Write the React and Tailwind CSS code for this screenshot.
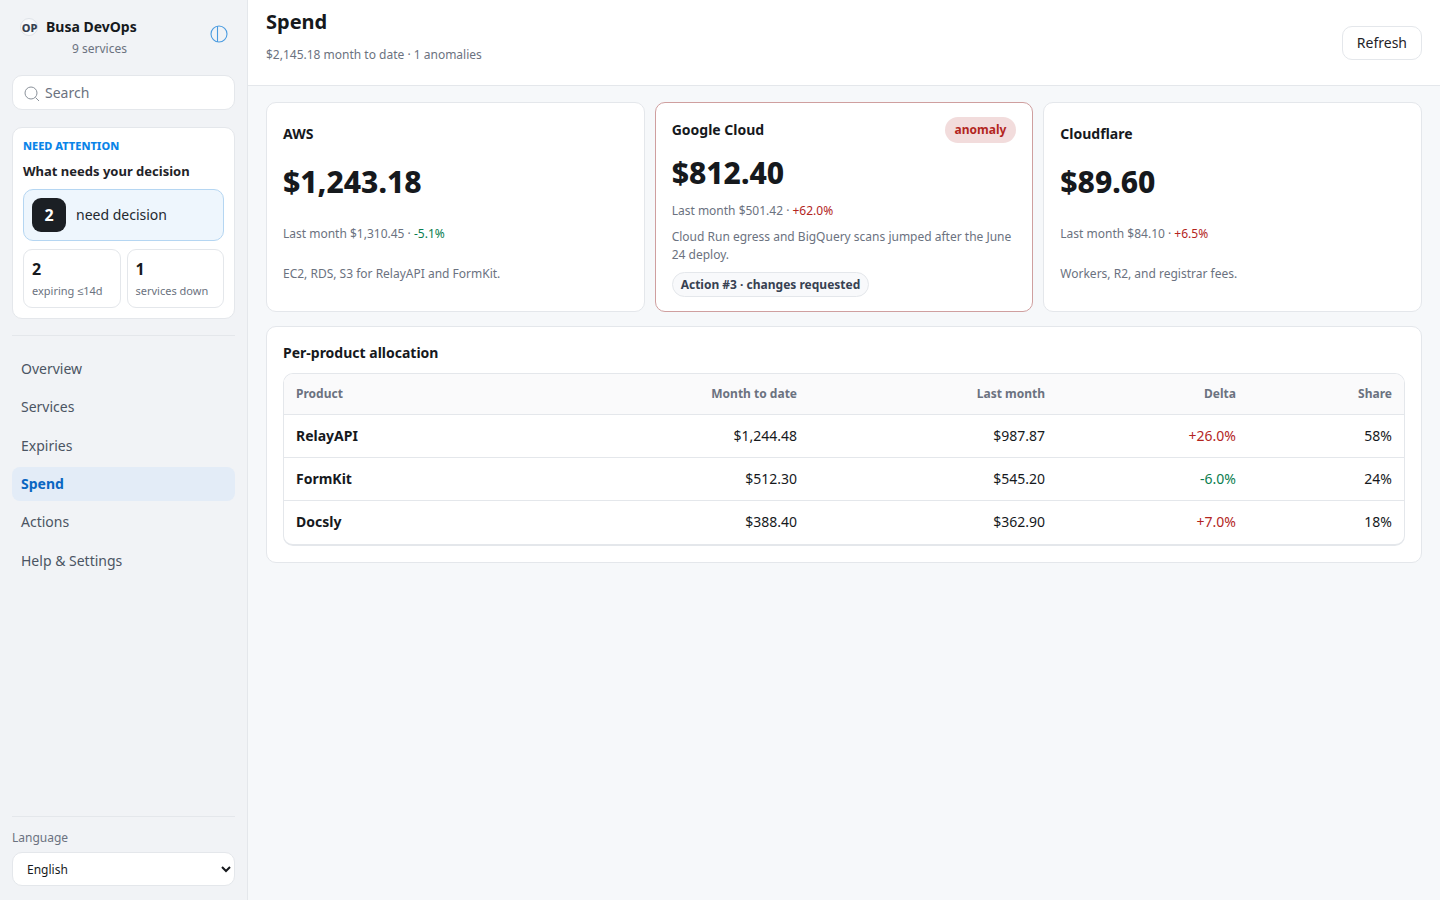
import React from 'react';

const navItems = ['Overview', 'Services', 'Expiries', 'Spend', 'Actions', 'Help & Settings'];

const providers = [
    { name: 'AWS', amount: '$1,243.18', last: '$1,310.45', delta: '-5.1%', good: true, note: 'EC2, RDS, S3 for RelayAPI and FormKit.' },
    { name: 'Cloudflare', amount: '$89.60', last: '$84.10', delta: '+6.5%', good: false, note: 'Workers, R2, and registrar fees.' },
];

const rows = [
    { name: 'RelayAPI', mtd: '$1,244.48', last: '$987.87', delta: '+26.0%', good: false, share: '58%' },
    { name: 'FormKit', mtd: '$512.30', last: '$545.20', delta: '-6.0%', good: true, share: '24%' },
    { name: 'Docsly', mtd: '$388.40', last: '$362.90', delta: '+7.0%', good: false, share: '18%' },
];

const Sidebar = () => (
    <aside className="w-[248px] shrink-0 h-[900px] flex flex-col bg-[#f1f3f6] border-r border-[#e4e7eb] px-3">
        <div className="relative h-[75px] pt-[17px]">
            <div className="flex items-center gap-[8px] pl-2">
                <span className="w-[18px] h-[18px] pl-[1px] rounded-full border border-[#dfe3e8] bg-[#f8f9fb] flex items-center justify-center text-[11px] leading-none font-extrabold text-[#374151]">OP</span>
                <span className="text-sm leading-5 font-bold text-[#16191d]">Busa DevOps</span>
            </div>
            <div className="pl-[60px] mt-[3px] text-xs leading-[18px] text-[#6b7280]">9 services</div>
            <svg className="absolute left-[197.5px] top-[25px]" width="18" height="18" viewBox="0 0 18 18" fill="none" stroke="#4a9be0" strokeWidth="1.1">
                <circle cx="9" cy="9" r="8" />
                <line x1="7.5" y1="1" x2="7.5" y2="17" />
            </svg>
        </div>
        <div className="h-[35px] flex items-center gap-[5px] rounded-[10px] border border-[#e4e7eb] bg-white pl-[11px]">
            <svg width="16" height="18" viewBox="0 0 16 18" fill="none" stroke="#8b929b" strokeWidth="1" className="mt-[3px]">
                <circle cx="7" cy="8" r="6" />
                <line x1="11.5" y1="12.5" x2="15" y2="16" />
            </svg>
            <span className="text-sm text-[#6b7280]">Search</span>
        </div>
        <div className="mt-[17px] h-[192px] rounded-[10px] border border-[#e4e7eb] bg-white px-[10px] pt-[10px]">
            <div className="text-[11px] leading-[16px] font-extrabold text-[#0a84e8]">NEED ATTENTION</div>
            <div className="mt-[8px] text-[13px] leading-[18px] font-bold text-[#1f2328]">What needs your decision</div>
            <div className="mt-[9px] h-[52px] flex items-center gap-[10px] rounded-[10px] border border-[#b5d6f2] bg-[#eef6fd] pl-2">
                <span className="w-[34px] h-[34px] rounded-[9px] bg-[#1b1f24] text-white flex items-center justify-center text-base font-bold">2</span>
                <span className="text-sm text-[#24292f]">need decision</span>
            </div>
            <div className="mt-2 grid grid-cols-2 gap-[6px]">
                <div className="h-[59px] rounded-[9px] border border-[#e4e7eb] px-2 pt-2">
                    <div className="text-base leading-[22px] font-bold text-[#16191d]">2</div>
                    <div className="text-[11px] leading-[16px] mt-[3px] text-[#6b7280]">expiring ≤14d</div>
                </div>
                <div className="h-[59px] rounded-[9px] border border-[#e4e7eb] px-2 pt-2">
                    <div className="text-base leading-[22px] font-bold text-[#16191d]">1</div>
                    <div className="text-[11px] leading-[16px] mt-[3px] text-[#6b7280]">services down</div>
                </div>
            </div>
        </div>
        <div className="mt-[16px] border-t border-[#e4e7eb]"></div>
        <nav className="mt-[15.7px] flex flex-col gap-[4px]">
            {navItems.map((item) => (
                <div
                    key={item}
                    className={item === 'Spend'
                        ? 'h-[34.4px] flex items-center px-[9px] rounded-lg bg-[#e3ecf7] text-sm font-bold text-[#0a66c2]'
                        : 'h-[34.4px] flex items-center px-[9px] rounded-lg text-sm text-[#4b5563]'}
                >
                    {item}
                </div>
            ))}
        </nav>
        <div className="mt-auto border-t border-[#e4e7eb] pt-[12px] pb-[14px]">
            <div className="text-xs leading-[18px] text-[#6b7280]">Language</div>
            <select className="mt-[5px] w-full h-[34px] rounded-[10px] border border-[#e4e7eb] bg-white pl-[10px] text-xs text-[#16191d]">
                <option>English</option>
            </select>
        </div>
    </aside>
);

const Delta = ({ good, children }) => (
    <span className={good ? 'text-[#0a7d4f]' : 'text-[#b3261e]'}>{children}</span>
);

const ProviderCard = ({ p }) => (
    <div className="h-[210px] rounded-[10px] border border-[#e4e7eb] bg-white px-4 pt-[21px]">
        <div className="text-sm leading-5 font-bold text-[#16191d]">{p.name}</div>
        <div className="mt-[18px] text-[30px] leading-[40px] font-extrabold text-[#16191d]">{p.amount}</div>
        <div className="mt-[23px] text-xs leading-[18px] text-[#6b7280]">Last month {p.last} · <Delta good={p.good}>{p.delta}</Delta></div>
        <div className="mt-[22px] text-xs leading-[18px] text-[#6b7280]">{p.note}</div>
    </div>
);

const App = () => (
    <div className="flex h-[900px] overflow-hidden bg-[#f6f8fa] font-['Noto_Sans',sans-serif]">
        <Sidebar />
        <main className="flex-1 min-w-0">
            <header className="h-[86px] flex items-center justify-between border-b border-[#e4e7eb] bg-white pl-[18px] pr-[18px]">
                <div className="self-start pt-[7px]">
                    <h1 className="text-xl leading-[30px] font-bold text-[#16191d]">Spend</h1>
                    <p className="mt-[9px] text-xs leading-[18px] text-[#6b7280]">$2,145.18 month to date · 1 anomalies</p>
                </div>
                <button className="h-[34px] px-[14px] rounded-[10px] border border-[#e4e7eb] bg-white text-sm text-[#1f2328]">Refresh</button>
            </header>
            <div className="px-[18px] pt-4">
                <div className="grid grid-cols-3 gap-[10px]">
                    <ProviderCard p={providers[0]} />
                    <div className="h-[210px] rounded-[10px] border border-[#cf9f9f] bg-white px-4 pt-[14px]">
                        <div className="flex items-center justify-between">
                            <span className="text-sm leading-5 font-bold text-[#16191d]">Google Cloud</span>
                            <span className="h-[26px] flex items-center px-[10px] rounded-full bg-[#f2dcdc] text-xs font-bold text-[#b3261e]">anomaly</span>
                        </div>
                        <div className="mt-[10px] text-[30px] leading-[40px] font-extrabold text-[#16191d]">$812.40</div>
                        <div className="mt-[9px] text-xs leading-[18px] text-[#6b7280]">Last month $501.42 · <Delta>+62.0%</Delta></div>
                        <div className="mt-[8px] text-xs leading-[18px] text-[#6b7280]">Cloud Run egress and BigQuery scans jumped after the June 24 deploy.</div>
                        <span className="mt-[8px] inline-flex h-[25px] items-center px-2 rounded-full border border-[#e4e7eb] bg-[#f8f9fb] text-xs font-bold text-[#374151]">Action #3 · changes requested</span>
                    </div>
                    <ProviderCard p={providers[1]} />
                </div>
                <section className="mt-[14px] h-[237px] rounded-[10px] border border-[#e4e7eb] bg-white px-4 pt-[15px]">
                    <h2 className="text-sm leading-[22px] font-bold text-[#16191d]">Per-product allocation</h2>
                    <div className="mt-[9px] rounded-[10px] border border-[#e4e7eb] border-b-2 overflow-hidden">
                        <table className="w-full table-fixed border-collapse text-sm text-[#16191d]">
                            <colgroup>
                                <col className="w-[300px]" />
                                <col className="w-[225px]" />
                                <col className="w-[248px]" />
                                <col className="w-[191px]" />
                                <col />
                            </colgroup>
                            <thead>
                                <tr className="h-[40px] bg-[#fafafb] text-xs text-[#6b7280]">
                                    <th className="px-3 text-left font-bold">Product</th>
                                    <th className="px-3 text-right font-bold">Month to date</th>
                                    <th className="px-3 text-right font-bold">Last month</th>
                                    <th className="px-3 text-right font-bold">Delta</th>
                                    <th className="px-3 text-right font-bold">Share</th>
                                </tr>
                            </thead>
                            <tbody>
                                {rows.map((row, i) => (
                                    <tr key={row.name} className={i === 2 ? 'h-[44px] border-t border-[#e4e7eb]' : 'h-[43px] border-t border-[#e4e7eb]'}>
                                        <td className="px-3 font-bold">{row.name}</td>
                                        <td className="px-3 text-right">{row.mtd}</td>
                                        <td className="px-3 text-right">{row.last}</td>
                                        <td className="px-3 text-right"><Delta good={row.good}>{row.delta}</Delta></td>
                                        <td className="px-3 text-right">{row.share}</td>
                                    </tr>
                                ))}
                            </tbody>
                        </table>
                    </div>
                </section>
            </div>
        </main>
    </div>
);

export default App;
